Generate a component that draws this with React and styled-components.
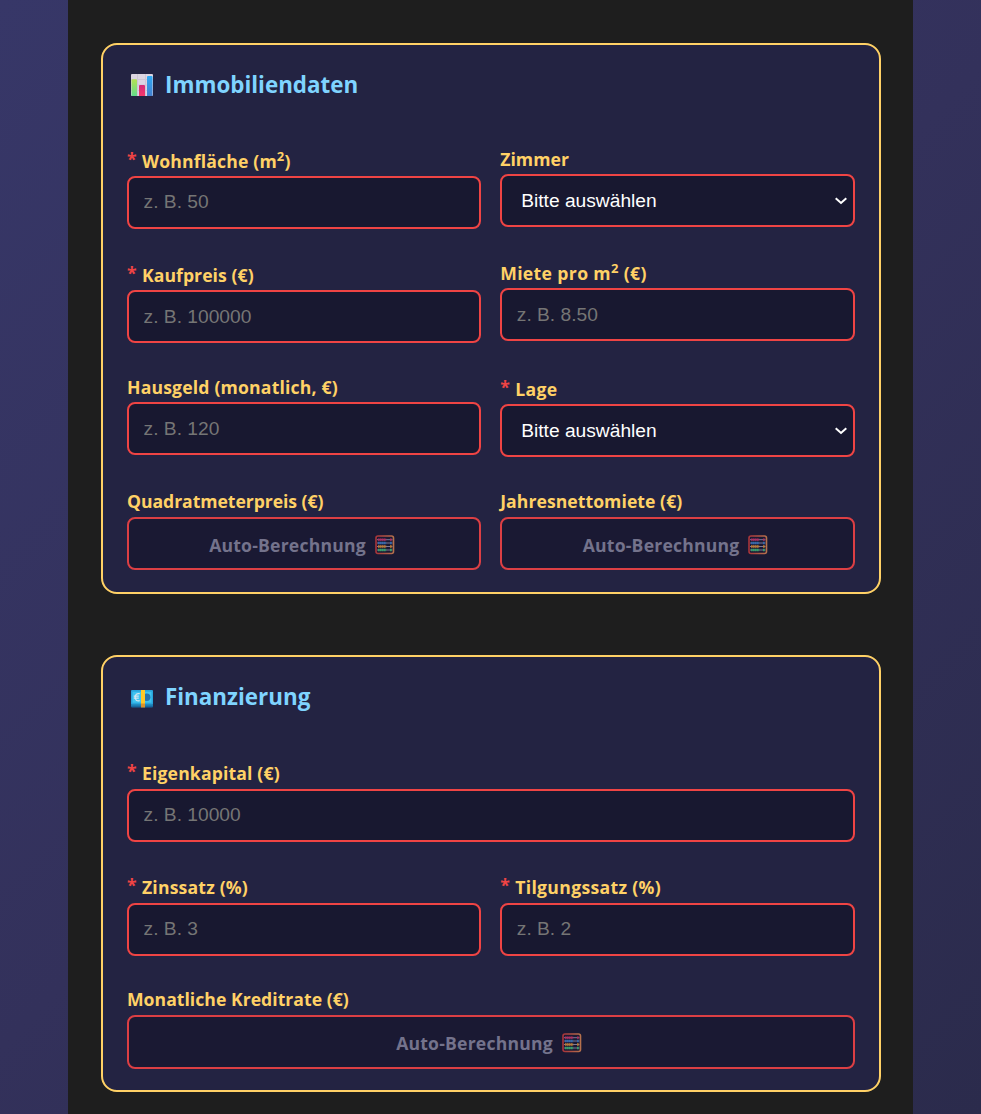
import React from "react";
import styled, { createGlobalStyle } from "styled-components";

const GlobalStyle = createGlobalStyle`
  *, *::before, *::after { box-sizing: border-box; }
  body {
    margin: 0;
    min-height: 1114px;
    background: linear-gradient(135deg, #373768 0%, #33315b 50%, #2b2b4c 100%);
    font-family: "Segoe UI", "Open Sans", "Noto Sans", sans-serif;
  }
`;

const Page = styled.main`
  width: 845px;
  height: 1114px;
  margin: 0 auto;
  padding: 43px 32px 0 33px;
  background: #1e1e1e;
  overflow: hidden;
`;

const Card = styled.section`
  width: 780px;
  margin-bottom: 61.5px;
  padding: 22px 24px 21.5px;
  background: #232342;
  border: 2px solid #ffd166;
  border-radius: 16px;
`;

const CardHeader = styled.h2`
  display: flex;
  align-items: center;
  gap: 11px;
  height: 36px;
  margin: 0 0 47.25px;
  padding-left: 3px;
  color: #7fd4ff;
  font-size: 22.4px;
  font-weight: 700;
  line-height: 36px;
  white-space: nowrap;
`;

const FieldGrid = styled.div`
  display: grid;
  grid-template-columns: 354px 1fr;
  gap: 35.2px 19.2px;
  align-items: start;
`;

const Field = styled.div`
  grid-column: ${(p) => (p.$wide ? "1 / -1" : "auto")};
  min-width: 0;
`;

const Label = styled.label`
  display: flex;
  align-items: flex-end;
  height: ${(p) => (p.$required ? 26 : 24)}px;
  color: #ffd166;
  font-size: 17.6px;
  font-weight: 700;
  line-height: 29.7px;
  letter-spacing: ${(p) => p.$tracking}px;
  white-space: pre;

  sup {
    font-size: 13px;
    line-height: 0;
    vertical-align: 7.5px;
  }
`;

const Star = styled.span`
  width: 15px;
  padding-bottom: 2px;
  color: #ef4444;
  letter-spacing: 0;
`;

const Input = styled.input`
  display: block;
  width: 100%;
  height: 52.9px;
  padding: 0 14.6px 0.5px;
  color: #fff;
  background: #181830;
  border: 2px solid #ef4444;
  border-radius: 8px;
  font: 19.2px "Liberation Sans", Arial, sans-serif;
  outline: none;

  &::placeholder { color: #757575; }
`;

const SelectWrap = styled.div`
  position: relative;
`;

const Select = styled.select`
  display: block;
  width: 100%;
  height: 52.9px;
  padding: 0 30px 0 19px;
  color: #fff;
  background: #181830;
  border: 2px solid #ef4444;
  border-radius: 8px;
  font: 19.2px "Liberation Sans", Arial, sans-serif;
  appearance: none;
  outline: none;
`;

const SelectArrow = styled.svg`
  position: absolute;
  top: 22px;
  right: 7px;
  width: 14px;
  height: 9px;
  pointer-events: none;
`;

const AutoResult = styled.div`
  display: flex;
  align-items: center;
  justify-content: center;
  gap: 9px;
  height: 53.65px;
  margin-top: 0.25px;
  padding: 3px 4px 0 0;
  color: #74738c;
  background: #1a1933;
  border: 2px solid #dc3f44;
  border-radius: 8px;
  font-size: 17.6px;
  font-weight: 700;
  letter-spacing: 0.2px;
`;

const ChartIcon = () => (
  <svg width="24" height="24" viewBox="0 0 24 24">
    <defs>
      <linearGradient id="barGreen" x2="0" y2="1"><stop stopColor="#b5e052" /><stop offset="1" stopColor="#62dc8c" /></linearGradient>
      <linearGradient id="barPink" x2="0" y2="1"><stop stopColor="#d52b78" /><stop offset="1" stopColor="#f5386b" /></linearGradient>
      <linearGradient id="barBlue" x2="0" y2="1"><stop stopColor="#2eaaf5" /><stop offset="1" stopColor="#4480cf" /></linearGradient>
    </defs>
    <rect x="1" y="1" width="22" height="22" rx="1" fill="#dcd5e3" />
    <path d="M1 6.5h22M1 12h22M1 17.5h22M7.5 1v22M15.5 1v22" stroke="#cec6d6" strokeWidth="1" />
    <path d="M1.5 23V7.2q0-1 1-1h3.5q1 0 1 1V23z" fill="url(#barGreen)" />
    <path d="M9 23V13q0-1 1-1h4q1 0 1 1v10z" fill="url(#barPink)" />
    <path d="M17 23V4q0-1 1-1h3.5q1 0 1 1v19z" fill="url(#barBlue)" />
  </svg>
);

const BanknoteIcon = () => (
  <svg width="24" height="24" viewBox="0 0 24 24">
    <path d="M1 18h22v3.5q0 1-1 1H2q-1 0-1-1z" fill="#1769a0" />
    <path d="M1 20.2h22" stroke="#1f87bb" strokeWidth="1" />
    <rect x="1" y="5" width="22" height="14.5" rx="1" fill="#29a5dc" />
    <rect x="2.5" y="6.7" width="19" height="11" fill="#3fc3f0" />
    <circle cx="16.7" cy="12.2" r="3.7" fill="#2673ad" />
    <path d="M9.7 8.7q-4.5-.7-4.5 3.5t4.5 3.5M3.8 11.2h5M3.8 13.2h5" fill="none" stroke="#d8e7ee" strokeWidth="1.2" />
    <rect x="11" y="5" width="4" height="14.5" fill="#ffc928" />
    <rect x="11" y="18.5" width="4" height="4" fill="#d9932d" />
  </svg>
);

const AbacusIcon = () => (
  <svg width="20" height="20" viewBox="0 0 20 20">
    <defs>
      <linearGradient id="abacusFrame"><stop stopColor="#a8343a" /><stop offset="1" stopColor="#b5704c" /></linearGradient>
    </defs>
    <rect x="1" y="1" width="17.5" height="17.5" rx="2" fill="#1b1933" stroke="url(#abacusFrame)" strokeWidth="1.6" />
    {[["#b22c60", 4.7], ["#3469ad", 8], ["#bd7c36", 11.5], ["#35a16a", 15]].map(([color, y]) => (
      <g key={y}>
        <path d={`M2 ${y}h15.5`} stroke="#7d7895" strokeWidth="1" />
        <path d={`M3 ${y}h8.2M15 ${y}h2`} stroke={color} strokeWidth="2.3" strokeDasharray="1.7 .3" />
      </g>
    ))}
  </svg>
);

function FormField({ label, required, wide, tracking = 0.06, children }) {
  return (
    <Field $wide={wide}>
      <Label $required={required} $tracking={tracking}>
        {required && <Star>*</Star>}
        <span>{label}</span>
      </Label>
      {children}
    </Field>
  );
}

const Choice = () => (
  <SelectWrap>
    <Select defaultValue="">
      <option value="">Bitte auswählen</option>
    </Select>
    <SelectArrow viewBox="0 0 14 9">
      <path d="M1.7 2.2 7 7l5.3-4.8" fill="none" stroke="#fff" strokeWidth="2" />
    </SelectArrow>
  </SelectWrap>
);

const Auto = () => (
  <AutoResult>
    <span>Auto-Berechnung</span>
    <AbacusIcon />
  </AutoResult>
);

export default function App() {
  return (
    <>
      <GlobalStyle />
      <Page>
        <Card>
          <CardHeader><ChartIcon /><span>Immobiliendaten</span></CardHeader>
          <FieldGrid>
            <FormField required tracking={0.17} label={<>Wohnfläche (m<sup>2</sup>)</>}><Input placeholder="z. B. 50" /></FormField>
            <FormField label="Zimmer"><Choice /></FormField>
            <FormField required label="Kaufpreis (€)"><Input placeholder="z. B. 100000" /></FormField>
            <FormField tracking={0.36} label={<>Miete pro m<sup>2</sup> (€)</>}><Input placeholder="z. B. 8.50" /></FormField>
            <FormField tracking={0.18} label="Hausgeld (monatlich, €)"><Input placeholder="z. B. 120" /></FormField>
            <FormField required tracking={0.35} label="Lage"><Choice /></FormField>
            <FormField tracking={-0.05} label="Quadratmeterpreis (€)"><Auto /></FormField>
            <FormField label="Jahresnettomiete (€)"><Auto /></FormField>
          </FieldGrid>
        </Card>
        <Card>
          <CardHeader><BanknoteIcon /><span>Finanzierung</span></CardHeader>
          <FieldGrid>
            <FormField wide required tracking={0.15} label="Eigenkapital (€)"><Input placeholder="z. B. 10000" /></FormField>
            <FormField required tracking={0.18} label="Zinssatz (%)"><Input placeholder="z. B. 3" /></FormField>
            <FormField required tracking={0.33} label="Tilgungssatz (%)"><Input placeholder="z. B. 2" /></FormField>
            <FormField wide tracking={0.03} label="Monatliche Kreditrate (€)"><Auto /></FormField>
          </FieldGrid>
        </Card>
      </Page>
    </>
  );
}
